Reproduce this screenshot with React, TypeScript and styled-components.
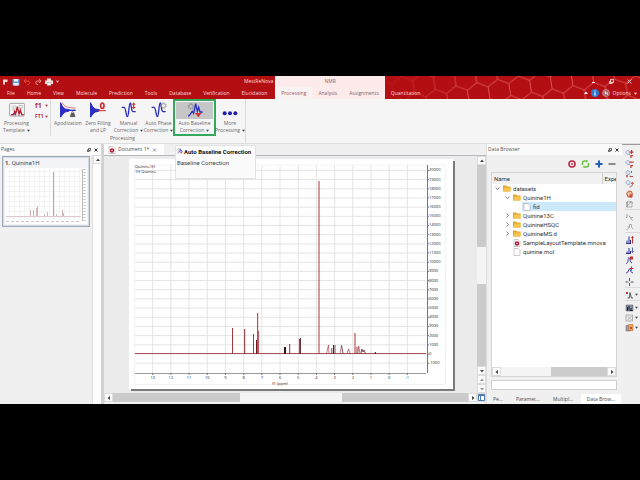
import React from "react";
import styled, { createGlobalStyle, css } from "styled-components";

const RED = "#b30e12";
const BLUE = "#2a2fc4";

const GlobalStyle = createGlobalStyle`
  *, *::before, *::after { box-sizing: border-box; }
  html, body { margin: 0; padding: 0; background: #000; }
  body { font: 5px/7px "Open Sans", "Noto Sans", sans-serif; color: #4a4a4a; }
  button, input { font: inherit; color: inherit; border: 0; padding: 0; margin: 0; background: none; }
  svg { display: block; flex: none; }
`;

const Letterbox = styled.div`
  min-height: 100vh;
  padding: 76px 0;
  background: #000;
  display: flex;
`;

const Window = styled.div`
  flex: 1;
  min-width: 0;
  display: flex;
  flex-direction: column;
  background: #f0f0f0;
`;

/* ---------- header ---------- */

const Header = styled.header`
  display: flex;
  height: 23px;
  background: ${RED};
  color: #fbdcdc;
`;

const HeaderPart = styled.div<{ $grow?: boolean; $pink?: boolean }>`
  display: flex;
  flex-direction: column;
  flex: ${(p) => (p.$grow ? "1" : "none")};
  min-width: 0;
  position: relative;
  ${(p) =>
    p.$pink &&
    css`
      background: #fdeaea;
      color: #8c6464;
    `}
`;

const TitleRow = styled.div<{ $justify?: string }>`
  display: flex;
  align-items: center;
  justify-content: ${(p) => p.$justify || "space-between"};
  height: 11px;
  position: relative;
`;

const TabRow = styled.nav<{ $inset?: boolean }>`
  display: flex;
  align-items: stretch;
  height: 12px;
  padding: ${(p) => (p.$inset ? "0 2px 0 1px" : "0")};
  position: relative;
`;

const RibbonTab = styled.button<{ $active?: boolean }>`
  padding: 0 6px;
  white-space: nowrap;
  ${(p) =>
    p.$active &&
    css`
      background: #f7f3f3;
      color: #a55050;
    `}
`;

const QuickBar = styled.div`
  display: flex;
  align-items: center;
  gap: 3px;
  padding-left: 1px;
`;

const IconButton = styled.button`
  display: flex;
  align-items: center;
  justify-content: center;
`;

const AppTitle = styled.span`
  padding-right: 2px;
`;

const HexBackdrop = styled.svg`
  position: absolute;
  inset: 0;
  width: 100%;
  height: 100%;
`;

const WindowButtons = styled.div`
  display: flex;
  gap: 13px;
  padding-right: 8px;
`;

const HeaderOptions = styled.div`
  display: flex;
  align-items: center;
  gap: 3px;
  margin-left: auto;
  padding-right: 3px;
`;

/* ---------- ribbon ---------- */

const Ribbon = styled.section`
  display: flex;
  height: 45px;
  background: #f5f5f5;
  border-bottom: 1px solid #dedede;
`;

const RibbonGroup = styled.div`
  display: flex;
  flex-direction: column;
  width: 246px;
  border-right: 1px solid #dadada;
`;

const RibbonTools = styled.div`
  display: flex;
  height: 37px;
`;

const Tool = styled.button<{ $w: number; $active?: boolean }>`
  width: ${(p) => p.$w}px;
  display: flex;
  flex-direction: column;
  align-items: center;
  padding-top: 3px;
  color: #6a6a6a;
  ${(p) =>
    p.$active &&
    css`
      border: 2px solid #35a85c;
      padding: 1px 1px 0;
    `}
`;

const ToolIcon = styled.span<{ $active?: boolean }>`
  display: flex;
  justify-content: center;
  align-self: stretch;
  height: 17px;
  margin-bottom: 1px;
  background: ${(p) => (p.$active ? "#c6c6c6" : "none")};
`;

const ToolLabel = styled.span`
  display: flex;
  align-items: center;
  gap: 2px;
  height: 7px;
  white-space: nowrap;
`;

const SmallTools = styled.div`
  width: 18px;
  margin-right: 2px;
  padding: 2px 0 0 2px;
  border-right: 1px solid #dadada;
  display: flex;
  flex-direction: column;
  gap: 3px;
`;

const SmallTool = styled.button<{ $size: number }>`
  display: flex;
  align-items: center;
  justify-content: space-between;
  height: 8px;
  width: 13px;
  font-size: ${(p) => p.$size}px;
  font-weight: 700;
  color: #b0333a;
`;

const GroupLabel = styled.div`
  text-align: center;
  line-height: 5px;
  color: #6a6a6a;
`;

/* ---------- workspace ---------- */

const Workspace = styled.main`
  flex: 1;
  display: flex;
  min-height: 260px;
`;

const PagesPanel = styled.aside`
  width: 104px;
  display: flex;
  flex-direction: column;
  border-right: 3px solid #d2d2d2;
`;

const PanelHeader = styled.div`
  display: flex;
  align-items: center;
  gap: 3px;
  height: 11px;
  padding: 0 3px 0 1px;
  background: #fbfbfb;
  color: #555;
`;

const PanelTitle = styled.span`
  margin-right: auto;
`;

const PagesBody = styled.div`
  flex: 1;
  display: flex;
  justify-content: space-between;
`;

const PageCard = styled.button`
  display: flex;
  flex-direction: column;
  align-self: flex-start;
  width: 88px;
  height: 71px;
  margin: 1px 0 0 2px;
  padding: 2px;
  gap: 1px;
  border: 1px solid #9fabb8;
  outline: 1px solid #d5dbe2;
  outline-offset: -2px;
  background: #f1f3f6;
  text-align: left;
  color: #44505c;
  font: 6px/8px Roboto, sans-serif;

  svg { width: 100%; flex: 1; min-height: 0; }
`;

const PagesScroll = styled.div`
  width: 9px;
  background: #fdfdfd;
  border-left: 1px solid #e0e0e0;
`;

const DocumentPane = styled.section`
  flex: 1;
  min-width: 0;
  display: flex;
  flex-direction: column;
`;

const DocumentTabs = styled.div`
  height: 12px;
  display: flex;
  border-bottom: 1px solid #b4b8bc;
  position: relative;
`;

const DocumentTab = styled.div`
  display: flex;
  align-items: center;
  gap: 2px;
  width: 60px;
  padding-left: 4px;
  background: #fdfdfd;
`;

const Tooltip = styled.div`
  position: absolute;
  left: 71px;
  top: 1px;
  width: 81px;
  height: 34px;
  padding: 2px 1px;
  background: #fbfbfb;
  border: 1px solid #e2e2e2;
  color: #444;
  font: 6px/8px Roboto, sans-serif;
  white-space: nowrap;
`;

const TooltipTitle = styled.strong`
  display: flex;
  gap: 1px;
  margin-bottom: 3px;
  color: #111;
`;

const CanvasRow = styled.div`
  flex: 1;
  display: flex;
  min-height: 0;
`;

const Canvas = styled.div`
  flex: 1;
  min-width: 0;
  display: flex;
  padding: 3px 24px 4px 25px;
  background: #ebebeb;
`;

const Paper = styled.div`
  flex: 1;
  min-width: 0;
  contain: size;
  background: #fff;
  box-shadow: 2px 2px 0 #7a7a7a;
  display: flex;

  svg { flex: 1; min-width: 0; width: 100%; height: 100%; }
`;

const ScrollBar = styled.div<{ $vertical?: boolean }>`
  display: flex;
  flex-direction: ${(p) => (p.$vertical ? "column" : "row")};
  ${(p) => (p.$vertical ? "width: 9px;" : "height: 9px;")}
  background: #cbcbcb;
`;

const ScrollSpace = styled.div<{ $grow: number; $thumb?: boolean }>`
  flex: ${(p) => p.$grow} 1 0;
  background: ${(p) => (p.$thumb ? "#f4f4f4" : "#cbcbcb")};
`;

const ScrollButton = styled.button`
  width: 9px;
  height: 9px;
  display: flex;
  align-items: center;
  justify-content: center;
  background: #fafafa;
  border: 1px solid #dcdcdc;
`;

const DocumentFooter = styled.div`
  display: flex;
  height: 11px;
  padding-bottom: 2px;

  > :first-child { flex: 1; }
`;

/* ---------- data browser ---------- */

const BrowserPanel = styled.aside`
  width: 136px;
  display: flex;
  flex-direction: column;
  border-left: 1px solid #dcdcdc;
`;

const BrowserTools = styled.div`
  display: flex;
  justify-content: flex-end;
  align-items: center;
  gap: 5px;
  height: 17px;
  padding-right: 6px;
`;

const BrowserBox = styled.div`
  flex: 1;
  display: flex;
  flex-direction: column;
  justify-content: space-between;
  margin: 0 5px 3px 4px;
  border: 1px solid #d4d4d4;
  background: #fff;
  overflow: hidden;
`;

const TreeTable = styled.table`
  width: 100%;
  border-collapse: collapse;
  table-layout: fixed;
  font: 6px/9px Roboto, sans-serif;
  color: #333;

  th, td { padding: 0; font-weight: 400; text-align: left; white-space: nowrap; }
  th { height: 11px; padding-left: 2px; background: #f1f1f1; overflow: hidden; }
  th + th { border-left: 1px solid #cfcfcf; width: 14px; }
`;

const TreeCell = styled.div<{ $level: number }>`
  display: flex;
  height: 9px;
  padding-left: ${(p) => p.$level * 10}px;
`;

const TreeToggle = styled.span`
  flex: none;
  width: 10px;
  display: flex;
  align-items: center;
  justify-content: center;
`;

const TreeItem = styled.span<{ $selected?: boolean }>`
  flex: 1;
  display: flex;
  align-items: center;
  gap: 2px;
  padding-left: 1px;
  background: ${(p) => (p.$selected ? "#cce8fb" : "none")};
`;

const ExpCell = styled.td<{ $selected?: boolean }>`
  background: ${(p) => (p.$selected ? "#cce8fb" : "none")};
`;

const FilterInput = styled.input`
  height: 10px;
  margin: 0 5px 4px 4px;
  background: #fff;
  border: 1px solid #cfcfcf;
`;

const BottomTabs = styled.div`
  display: flex;
  height: 10px;
`;

const BottomTab = styled.button<{ $w: number; $active?: boolean }>`
  width: ${(p) => p.$w}px;
  text-align: ${(p) => (p.$active ? "center" : "left")};
  padding-left: ${(p) => (p.$active ? 0 : 6)}px;
  white-space: nowrap;
  background: ${(p) => (p.$active ? "#fff" : "none")};
`;

const SideBar = styled.aside`
  width: 18px;
  display: flex;
  flex-direction: column;
  padding: 4px 0 0 3px;
  border-top: 1px solid #9a9a9a;
`;

const SideSection = styled.div<{ $plain?: boolean }>`
  display: flex;
  flex-direction: column;
  gap: 1px;
  padding-bottom: 1px;
  margin-bottom: 2px;
  border-bottom: ${(p) => (p.$plain ? "0" : "1px solid #dadada")};
`;

const SideButton = styled.button`
  display: flex;
  align-items: center;
  gap: 1px;
  height: 9px;
`;

/* ---------- icons ---------- */

const Caret = ({ color = "#444", dir = "down", size = 4 }: { color?: string; dir?: string; size?: number }) => {
  const d: Record<string, string> = {
    down: "M0 2H8L4 7Z",
    up: "M0 6H8L4 1Z",
    left: "M6 0V8L1 4Z",
    right: "M2 0V8L7 4Z",
  };
  return (
    <svg width={size} height={size} viewBox="0 0 8 8" fill={color}>
      <path d={d[dir]} />
    </svg>
  );
};

const Gear = ({ x, y }: { x: number; y: number }) => (
  <g transform={`translate(${x} ${y})`} fill="none" stroke="#888">
    <circle r="6" strokeWidth="2" />
    <circle r="8.5" strokeWidth="3" strokeDasharray="3.3 3.3" />
  </g>
);

const phaseLine = "M2 16H9C15 16 15 44 19 44C24 44 23 3 28 3C31 3 30 28 36 29H44";
const fid = "M2 1V46M2 4L9 16L16 21L28 23V27L16 30L9 35L2 45Z";

const toolArt: Record<string, React.ReactNode> = {
  template: (
    <>
      <rect x="2" y="4" width="44" height="38" rx="3" fill="#fff" stroke="#777" strokeWidth="2" />
      <path d="M8 12H22M8 18H22M8 24H18M30 10H40V18H30Z" stroke="#999" strokeWidth="2" fill="none" />
      <path d="M6 38H14L17 28L20 36L25 14L30 36L34 24L38 38H44" stroke="#b3202c" strokeWidth="4" fill="none" />
      <path d="M12 34L16 38" stroke={BLUE} strokeWidth="3" />
    </>
  ),
  apodization: (
    <>
      <path d={fid} fill={BLUE} stroke={BLUE} strokeWidth="3" />
      <path d="M28 25H47" stroke={BLUE} strokeWidth="4" />
      <path d="M7 2C11 16 26 17 47 18" fill="none" stroke="#d23b3b" strokeWidth="2" />
      <path d="M34 34H42L45 44H31Z" fill="#555" stroke="#555" strokeWidth="2" />
      <circle cx="38" cy="32" r="3" fill="none" stroke="#555" strokeWidth="2" />
    </>
  ),
  zero: (
    <>
      <path d={fid} fill={BLUE} stroke={BLUE} strokeWidth="3" />
      <path d="M22 26H48" stroke="#cf2b2f" strokeWidth="3" />
      <ellipse cx="37" cy="11" rx="5" ry="8" fill="none" stroke="#cf2b2f" strokeWidth="5" />
    </>
  ),
  manual: (
    <>
      <path d={phaseLine} fill="none" stroke={BLUE} strokeWidth="4" />
      <path d="M38 1L44 8H40V15H44L38 22L32 15H36V8H32Z" fill="#d23b3b" />
    </>
  ),
  autophase: (
    <>
      <path d={phaseLine} fill="none" stroke={BLUE} strokeWidth="4" />
      <Gear x={37} y={11} />
    </>
  ),
  baseline: (
    <>
      <Gear x={12} y={13} />
      <path d="M3 42C10 42 12 30 16 28L20 34L26 5L31 28L35 16L39 30L47 30" fill="none" stroke={BLUE} strokeWidth="4" />
      <path d="M24 33H44L34 46Z" fill="#d5303a" />
    </>
  ),
  more: (
    <g fill="#2020b0">
      <circle cx="8" cy="34" r="6" />
      <circle cx="24" cy="34" r="6" />
      <circle cx="40" cy="34" r="6" />
    </g>
  ),
};

const Art = ({ name, size = 16 }: { name: string; size?: number }) => (
  <svg width={size} height={size} viewBox="0 0 48 48">
    {toolArt[name]}
  </svg>
);

const DocIcon = ({ nova }: { nova?: boolean }) => (
  <svg width="8" height="8" viewBox="0 0 16 16">
    <path d="M2 1H10L14 5V15H2Z" fill="#fff" stroke="#999" />
    {nova && <circle cx="8" cy="9" r="3" fill="#fff" stroke="#b01830" strokeWidth="3" />}
  </svg>
);

const FolderIcon = () => (
  <svg width="8" height="7" viewBox="0 0 16 14">
    <path d="M0 1H6L8 3H15V13H0Z" fill="#e2a52b" />
    <path d="M2 5H16L14 13H0Z" fill="#f5c350" />
  </svg>
);

const FloatClose = () => (
  <>
    <IconButton aria-label="Float">
      <svg width="4" height="4" viewBox="0 0 8 8" fill="none" stroke="#333" strokeWidth="1.5">
        <path d="M3 1H7V5H3ZM1 3V7H5" />
      </svg>
    </IconButton>
    <IconButton aria-label="Close panel">
      <svg width="4" height="4" viewBox="0 0 8 8" stroke="#333" strokeWidth="2">
        <path d="M1 1L7 7M7 1L1 7" />
      </svg>
    </IconButton>
  </>
);

/* ---------- spectrum ---------- */

const BASE = 195;
const ppmX = (ppm: number) => 22.7 + (13 - ppm) * 18.19;
const intY = (k: number) => BASE - k * 9.18;

const peaks: [number, number, number, string][] = [
  [102.5, 26, 1, "#a33a42"], [114.7, 25, 1, "#802830"], [123.5, 20, 1, "#a33a42"],
  [126.5, 14, 1, "#701820"], [127.7, 41, 1, "#b02c34"], [128.6, 23, 1, "#b05058"],
  [155, 7, 2, "#3a1015"], [159.7, 10, 1, "#903038"], [169.4, 15, 1, "#b03038"],
  [170.4, 16, 1, "#601820"], [189, 173, 1, "#b0303a"], [203.5, 9, 1, "#701820"],
  [201.8, 6, 1, "#903840"], [225, 21, 1, "#b03038"],
  [227, 7, 1, "#903038"], [245.3, 2, 1, "#202020"],
];

const Spectrum = () => {
  const ppms = Array.from({ length: 15 }, (_, i) => 13 - i);
  const levels = Array.from({ length: 22 }, (_, i) => i - 1);
  return (
    <svg viewBox="0 0 322 230" role="img" aria-label="Quinine 1H spectrum" fontFamily="Open Sans, sans-serif">
      <g stroke="#e4e4e4" strokeWidth="1">
        {ppms.map((p) => <path key={p} d={`M${ppmX(p)} 6V214`} />)}
        {levels.map((k) => <path key={k} d={`M5 ${intY(k)}H296`} />)}
      </g>
      <path d="M4.5 6V225.500H315.500V6Z" fill="none" stroke="#f3f3f3" />
      <path d="M297.500 6V214" stroke="#777" />
      <path d="M5 214.500H296" stroke="#999" />
      <g stroke="#777">
        {levels.map((k) => <path key={k} d={`M297 ${intY(k)}H299`} />)}
        {ppms.map((p) => <path key={p} d={`M${ppmX(p)} 214V216`} />)}
      </g>
      <g fill="#222" fontSize="4">
        {levels.map((k) => <text key={k} x="299" y={intY(k) + 1}>{k * 1000}</text>)}
        {ppms.map((p) => <text key={p} x={ppmX(p)} y="220" textAnchor="middle">{p}</text>)}
        <text x="150" y="226" textAnchor="middle">f1 (ppm)</text>
        <text x="5" y="9">Quinine1H</text>
        <text x="5" y="14">1H Quinine</text>
      </g>
      <path d={`M5 ${BASE - 0.5}H296`} stroke="#a8525a" />
      {peaks.map(([x, h, w, c]) => (
        <path key={x} d={`M${x} ${BASE}V${BASE - h}`} stroke={c} strokeWidth={w} />
      ))}
      <g fill="none" strokeWidth="0.7">
        <path d="M196.500 194.500L198.500 186L199 194.500M210 194.500L211.500 187M228 194.500L228.700 187L230 194.500M217 194.500L218.500 190L220 194.500" stroke="#a0444c" />
        <path d="M211.500 186L213 194.500M205 194.500V186M231 194.500L231.800 190L233 193L234 191L235.500 194.500" stroke="#401418" />
      </g>
    </svg>
  );
};

const Thumbnail = () => (
  <svg viewBox="0 0 82 56" aria-hidden="true">
    <rect width="82" height="56" fill="#fff" />
    <g stroke="#f3f3f3" strokeWidth="1">
      {Array.from({ length: 15 }, (_, i) => <path key={i} d={`M${4.5 + i * 5} 1V52`} />)}
      {Array.from({ length: 10 }, (_, i) => <path key={i} d={`M1 ${3.5 + i * 5}H76`} />)}
    </g>
    <path d="M77.500 1V53" stroke="#bbb" />
    <path d="M79.500 1V53" stroke="#bbb" strokeDasharray="1 2" strokeWidth="2" />
    <path d="M1 53.500H76" stroke="#c5c5c5" strokeDasharray="3 2" />
    <path d="M1 48.500H76" stroke="#e0c8ca" />
    <path d="M25.500 48V42M28.500 48V42M31.500 48V40M32.500 48V38M39.500 48V46M42.500 48V44M51.500 48V46M57.500 48V42M58.500 48V45" stroke="#d0b4b6" />
    <path d="M48.500 48V4" stroke="#b0a6a6" />
  </svg>
);

/* ---------- data ---------- */

const leftTabs = ["File", "Home", "View", "Molecule", "Prediction", "Tools", "Database", "Verification", "Elucidation"];
const nmrTabs = ["Processing", "Analysis", "Assignments"];

const tools: { art: string; a: string; b: string; w: number; caret?: boolean; active?: boolean }[] = [
  { art: "apodization", a: "Apodization", b: "", w: 30 },
  { art: "zero", a: "Zero Filling", b: "and LP", w: 30 },
  { art: "manual", a: "Manual", b: "Correction", w: 31, caret: true },
  { art: "autophase", a: "Auto Phase", b: "Correction", w: 29, caret: true },
  { art: "baseline", a: "Auto Baseline", b: "Correction", w: 43, caret: true, active: true },
  { art: "more", a: "More", b: "Processing", w: 28, caret: true },
];

type Row = { name: string; level: number; kind: "folder" | "file" | "nova"; open?: boolean; selected?: boolean };
const rows: Row[] = [
  { name: "datasets", level: 0, kind: "folder", open: true },
  { name: "Quinine1H", level: 1, kind: "folder", open: true },
  { name: "fid", level: 2, kind: "file", selected: true },
  { name: "Quinine13C", level: 1, kind: "folder", open: false },
  { name: "QuinineHSQC", level: 1, kind: "folder", open: false },
  { name: "QuinineMS.d", level: 1, kind: "folder", open: false },
  { name: "SampleLayoutTemplate.mnova", level: 1, kind: "nova" },
  { name: "quinine.mol", level: 1, kind: "file" },
];

const lens = <path d="M7 8L10 11M5 1A4 4 0 1 0 5.010 1" stroke="#8fa0bd" strokeWidth="1.500" fill="#dce6f5" />;

type SideTool = { label: string; art: React.ReactNode; caret?: boolean };
const sideArt: { plain?: boolean; items: SideTool[] }[] = [
  {
    items: [
      { label: "Zoom in", art: <>{lens}<path d="M12 0V8M8 4H16M11 16V11H15" stroke="#c23a35" strokeWidth="2.500" fill="none" /></> },
      { label: "Zoom out", art: <>{lens}<path d="M8 4H16M11 16V11H15" stroke="#c23a35" strokeWidth="2.500" fill="none" /></> },
      { label: "Full spectrum", art: <>{lens}<path d="M1 12H5M3 10V15M8 13H15M12 2V6" stroke="#c0504a" strokeWidth="2" /></> },
      { label: "Previous zoom", art: <>{lens}<path d="M8 14C14 14 14 9 14 5M11 8L14 4L16 8" stroke="#c0504a" strokeWidth="2" fill="none" /></> },
      { label: "Pan", art: <><path d="M2 7L6 2L12 3L14 9L10 14H5Z" fill="#e8b79a" stroke="#c0603a" strokeWidth="2" /><path d="M11 8V16M7 12H15" stroke="#c22c28" strokeWidth="2" /></> },
      { label: "Expand", art: <path d="M2 4H13V14H2ZM4 11L11 5M8 2L15 6M4 2V14" stroke="#989898" strokeWidth="1.500" fill="none" /> },
    ],
  },
  {
    items: [
      { label: "Peak tool", art: <path d="M3 2V8L1 10M7 5L10 10L14 15M10 9H15" stroke="#a5a5a5" strokeWidth="2" fill="none" /> },
      { label: "Peak tool off", art: <path d="M2 14L8 8M8 8V3H12V8L15 12M4 6L7 9" stroke="#aaa" strokeWidth="2" fill="none" /> },
    ],
  },
  {
    plain: true,
    items: [
      { label: "Increase intensity", art: <><path d="M1 15H11M3 15V9M7 15V1M10 15V8" stroke="#283090" strokeWidth="2" /><path d="M14 1V15M12 4L14 1L16 4" stroke="#c23038" strokeWidth="2" fill="none" /></> },
      { label: "Decrease intensity", art: <><path d="M1 15H11M3 15V11M7 15V4M10 15V10" stroke="#283090" strokeWidth="2" /><path d="M14 3V13M12 10L14 13L16 10" stroke="#5068b0" strokeWidth="2" fill="none" /></> },
      { label: "Fit to height", art: <><path d="M1 15C6 15 5 3 7 3C9 3 9 14 13 14" stroke="#3840a0" strokeWidth="2" fill="none" /><path d="M9 1H15V7H9Z" fill="#c23038" /></> },
      { label: "Fit highest peak", art: <><path d="M1 14C6 14 6 6 8 6C10 6 10 14 15 14" stroke="#3840a0" strokeWidth="2" fill="none" /><path d="M12 1V9M8 5H16" stroke="#c23038" strokeWidth="2" /></> },
    ],
  },
  { items: [{ label: "Crosshair", art: <path d="M8 0V6M8 10V16M0 8H6M10 8H16" stroke="#556" strokeWidth="2" /> }] },
  { items: [{ label: "Pick peaks", caret: true, art: <><path d="M1 2L5 6M5 2L1 6" stroke="#c23038" strokeWidth="2" /><path d="M4 14H8L9 3L12 14H15" stroke="#555" strokeWidth="2" fill="none" /></> }] },
  {
    plain: true,
    items: [
      { label: "Save view", caret: true, art: <><path d="M1 2H15V14H1Z" fill="#88909a" stroke="#556" /><path d="M4 13V6M7 13V4M11 13V8M9 13H14" stroke="#223" strokeWidth="2" /></> },
      { label: "Cut region", caret: true, art: <path d="M1 2H14V14H1ZM4 4L12 12M12 4L4 12" stroke="#999" strokeWidth="1.500" fill="none" /> },
      { label: "Paste layout", caret: true, art: <><path d="M1 3H10V14H1Z" fill="#9aa0ac" stroke="#667" /><path d="M6 1H15V13H6Z" fill="#f0a858" stroke="#b05a28" /><circle cx="11" cy="8" r="2" fill="#a03028" /></> },
    ],
  },
];

const HScroll = ({ parts }: { parts: number[] }) => (
  <ScrollBar>
    <ScrollButton aria-label="Scroll left"><Caret dir="left" /></ScrollButton>
    {parts[0] > 0 && <ScrollSpace $grow={parts[0]} />}
    <ScrollSpace $grow={parts[1]} $thumb />
    <ScrollSpace $grow={parts[2]} />
    <ScrollButton aria-label="Scroll right"><Caret dir="right" /></ScrollButton>
  </ScrollBar>
);

export default function App() {
  return (
    <Letterbox>
      <GlobalStyle />
      <Window>
        <Header>
          <HeaderPart>
            <TitleRow>
              <QuickBar>
                <svg width="8" height="8" viewBox="0 0 16 16"><path d="M4 13V3H13V8H8V13Z" fill="#f6d5d5" /></svg>
                <IconButton aria-label="Save">
                  <svg width="8" height="8" viewBox="0 0 16 16"><path d="M1 2H15V15H1Z" fill="#5f9bd8" /><path d="M4 2H12V7H4ZM3 10H13V15H3Z" fill="#eef5ff" /></svg>
                </IconButton>
                <IconButton aria-label="Undo">
                  <svg width="8" height="8" viewBox="0 0 16 16" fill="none" stroke="#e04a3c" strokeWidth="2"><path d="M6 2L2 6L6 10M2 6H10C15 6 15 13 9 13" /></svg>
                </IconButton>
                <IconButton aria-label="Redo">
                  <svg width="8" height="8" viewBox="0 0 16 16" fill="none" stroke="#ee9a94" strokeWidth="2"><path d="M10 2L14 6L10 10M14 6H7C2 6 2 13 8 13" /></svg>
                </IconButton>
                <IconButton aria-label="Print">
                  <svg width="8" height="8" viewBox="0 0 16 16"><path d="M4 1H12V5H4ZM0 5H16V12H0Z" fill="#f3e6e6" /><path d="M4 9H12V15H4Z" fill="#fff" stroke="#a77" /></svg>
                </IconButton>
                <IconButton aria-label="Customize"><Caret color="#f6d5d5" size={3} /></IconButton>
              </QuickBar>
              <AppTitle>MestReNova</AppTitle>
            </TitleRow>
            <TabRow $inset>
              {leftTabs.map((t) => <RibbonTab key={t}>{t}</RibbonTab>)}
            </TabRow>
          </HeaderPart>
          <HeaderPart $pink>
            <TitleRow $justify="center">NMR</TitleRow>
            <TabRow>
              {nmrTabs.map((t, i) => <RibbonTab key={t} $active={i === 0}>{t}</RibbonTab>)}
            </TabRow>
          </HeaderPart>
          <HeaderPart $grow>
            <HexBackdrop aria-hidden="true">
              <defs>
                <pattern id="hex" width="21" height="36" patternUnits="userSpaceOnUse" patternTransform="translate(6 2) rotate(-9)">
                  <path d="M0 6L10.500 0L21 6V18L10.500 24L0 18ZM10.500 24V36" fill="none" stroke="#dc5054" strokeWidth="1" />
                </pattern>
                <linearGradient id="fade"><stop offset="0" stopColor={RED} stopOpacity="0.900" /><stop offset="0.350" stopColor={RED} stopOpacity="0" /></linearGradient>
              </defs>
              <rect width="100%" height="100%" fill="url(#hex)" />
              <rect width="100%" height="100%" fill="url(#fade)" />
            </HexBackdrop>
            <TitleRow $justify="flex-end">
              <WindowButtons>
                <IconButton aria-label="Minimize"><svg width="5" height="5" viewBox="0 0 10 10"><path d="M2 7H8" stroke="#fff" strokeWidth="2" /></svg></IconButton>
                <IconButton aria-label="Restore"><svg width="5" height="5" viewBox="0 0 10 10" fill="none" stroke="#fff" strokeWidth="1.500"><path d="M3 1H9V7H3ZM1 4V9H7" /></svg></IconButton>
                <IconButton aria-label="Close"><svg width="5" height="5" viewBox="0 0 10 10"><path d="M1 1L9 9M9 1L1 9" stroke="#fff" strokeWidth="1.500" /></svg></IconButton>
              </WindowButtons>
            </TitleRow>
            <TabRow>
              <RibbonTab>Quantitation</RibbonTab>
              <HeaderOptions>
                <IconButton aria-label="Collapse ribbon"><Caret dir="up" color="#fff" /></IconButton>
                <IconButton aria-label="About">
                  <svg width="8" height="8" viewBox="0 0 16 16"><circle cx="8" cy="8" r="8" fill="#2f78d0" /><path d="M8 3V5M8 7V13" stroke="#fff" strokeWidth="2.500" /></svg>
                </IconButton>
                <IconButton aria-label="Manual">
                  <svg width="8" height="8" viewBox="0 0 16 16"><circle cx="8" cy="8" r="7" fill="#b8606a" stroke="#e8b8bc" /><path d="M5 4H9V11H5ZM7 6H12V12H8" fill="#fff" stroke="#844" /></svg>
                </IconButton>
                <IconButton>Options</IconButton>
                <Caret color="#fff" size={3} />
              </HeaderOptions>
            </TabRow>
          </HeaderPart>
        </Header>

        <Ribbon>
          <RibbonGroup>
            <RibbonTools>
              <Tool $w={33}>
                <ToolIcon><Art name="template" /></ToolIcon>
                <ToolLabel>Processing</ToolLabel>
                <ToolLabel>Template <Caret size={3} /></ToolLabel>
              </Tool>
              <SmallTools>
                <SmallTool $size={7}>f1 <Caret size={3} color="#b0333a" /></SmallTool>
                <SmallTool $size={5}>FT1 <Caret size={3} color="#b0333a" /></SmallTool>
              </SmallTools>
              {tools.map((t) => (
                <Tool key={t.art} $w={t.w} $active={t.active}>
                  <ToolIcon $active={t.active}><Art name={t.art} /></ToolIcon>
                  <ToolLabel>{t.a}</ToolLabel>
                  <ToolLabel>{t.b}{t.caret && <Caret size={3} />}</ToolLabel>
                </Tool>
              ))}
            </RibbonTools>
            <GroupLabel>Processing</GroupLabel>
          </RibbonGroup>
        </Ribbon>

        <Workspace>
          <PagesPanel>
            <PanelHeader>
              <PanelTitle>Pages</PanelTitle>
              <FloatClose />
            </PanelHeader>
            <PagesBody>
              <PageCard>
                <span><b>1.</b> Quinine1H</span>
                <Thumbnail />
              </PageCard>
              <PagesScroll>
                <ScrollButton aria-label="Scroll pages up"><Caret dir="up" /></ScrollButton>
              </PagesScroll>
            </PagesBody>
          </PagesPanel>

          <DocumentPane>
            <DocumentTabs>
              <DocumentTab>
                <DocIcon nova />
                <span>Document 1*</span>
                <IconButton aria-label="Close document">
                  <svg width="6" height="4" viewBox="0 0 12 8" stroke="#777" strokeWidth="1.500"><path d="M4 1L10 7M10 1L4 7" /></svg>
                </IconButton>
              </DocumentTab>
              <Tooltip role="tooltip">
                <TooltipTitle><Art name="baseline" size={6} />Auto Baseline Correction</TooltipTitle>
                Baseline Correction
              </Tooltip>
            </DocumentTabs>
            <CanvasRow>
              <Canvas>
                <Paper><Spectrum /></Paper>
              </Canvas>
              <ScrollBar $vertical>
                <ScrollButton aria-label="Scroll up"><Caret dir="up" /></ScrollButton>
                <ScrollSpace $grow={82} />
                <ScrollSpace $grow={37} $thumb />
                <ScrollSpace $grow={82} />
                <ScrollButton aria-label="Scroll down"><Caret /></ScrollButton>
                <ScrollButton aria-label="Previous page"><Caret dir="up" color="#999" /></ScrollButton>
                <ScrollButton aria-label="Next page"><Caret color="#999" /></ScrollButton>
              </ScrollBar>
            </CanvasRow>
            <DocumentFooter>
              <HScroll parts={[126, 101, 125]} />
              <ScrollButton aria-label="Page view">
                <svg width="7" height="7" viewBox="0 0 14 14"><path d="M1 1H13V13H1Z" fill="#fff" stroke="#4a78b0" strokeWidth="2" /><path d="M1 3H13M5 3V13" stroke="#4a78b0" strokeWidth="2" /></svg>
              </ScrollButton>
            </DocumentFooter>
          </DocumentPane>

          <BrowserPanel>
            <PanelHeader>
              <PanelTitle>Data Browser</PanelTitle>
              <FloatClose />
            </PanelHeader>
            <BrowserTools>
              <IconButton aria-label="Target"><svg width="8" height="8" viewBox="0 0 16 16"><circle cx="8" cy="8" r="6" fill="#fff" stroke="#b8203a" strokeWidth="3" /><circle cx="8" cy="8" r="2" fill="#b8203a" /></svg></IconButton>
              <IconButton aria-label="Refresh"><svg width="9" height="8" viewBox="0 0 18 16" fill="none" stroke="#6cbf3f" strokeWidth="3"><path d="M3 10V6C3 3 5 2 8 2H12M15 6V10C15 13 13 14 10 14H6" /><path d="M11 0L15 2L11 5ZM7 11L3 14L7 16Z" fill="#6cbf3f" stroke="none" /></svg></IconButton>
              <IconButton aria-label="Add"><svg width="8" height="8" viewBox="0 0 16 16"><path d="M8 1V15M1 8H15" stroke="#1f5fae" strokeWidth="4" /></svg></IconButton>
              <IconButton aria-label="Remove"><svg width="8" height="8" viewBox="0 0 16 16"><path d="M1 8H15" stroke="#8c8c8c" strokeWidth="4" /></svg></IconButton>
            </BrowserTools>
            <BrowserBox>
              <TreeTable>
                <thead>
                  <tr><th>Name</th><th>Expe</th></tr>
                </thead>
                <tbody>
                  {rows.map((r) => (
                    <tr key={r.name}>
                      <td>
                        <TreeCell $level={r.level}>
                          <TreeToggle>
                            {r.open !== undefined && (
                              <svg width="5" height="5" viewBox="0 0 10 10" fill="none" stroke="#555" strokeWidth="1.500">
                                <path d={r.open ? "M1 3L5 7L9 3" : "M3 1L7 5L3 9"} />
                              </svg>
                            )}
                          </TreeToggle>
                          <TreeItem $selected={r.selected}>
                            {r.kind === "folder" ? <FolderIcon /> : <DocIcon nova={r.kind === "nova"} />}
                            {r.name}
                          </TreeItem>
                        </TreeCell>
                      </td>
                      <ExpCell $selected={r.selected} />
                    </tr>
                  ))}
                </tbody>
              </TreeTable>
              <HScroll parts={[0, 51, 57]} />
            </BrowserBox>
            <FilterInput aria-label="Filter" />
            <BottomTabs>
              <BottomTab $w={23}>Pe...</BottomTab>
              <BottomTab $w={37}>Paramet...</BottomTab>
              <BottomTab $w={34}>Multipl...</BottomTab>
              <BottomTab $w={40} $active>Data Brow...</BottomTab>
            </BottomTabs>
          </BrowserPanel>

          <SideBar>
            {sideArt.map((section, i) => (
              <SideSection key={i} $plain={section.plain}>
                {section.items.map((s) => (
                  <SideButton key={s.label} aria-label={s.label}>
                    <svg width="9" height="8" viewBox="0 0 16 16">{s.art}</svg>
                    {s.caret && <Caret size={3} />}
                  </SideButton>
                ))}
              </SideSection>
            ))}
          </SideBar>
        </Workspace>
      </Window>
    </Letterbox>
  );
}
